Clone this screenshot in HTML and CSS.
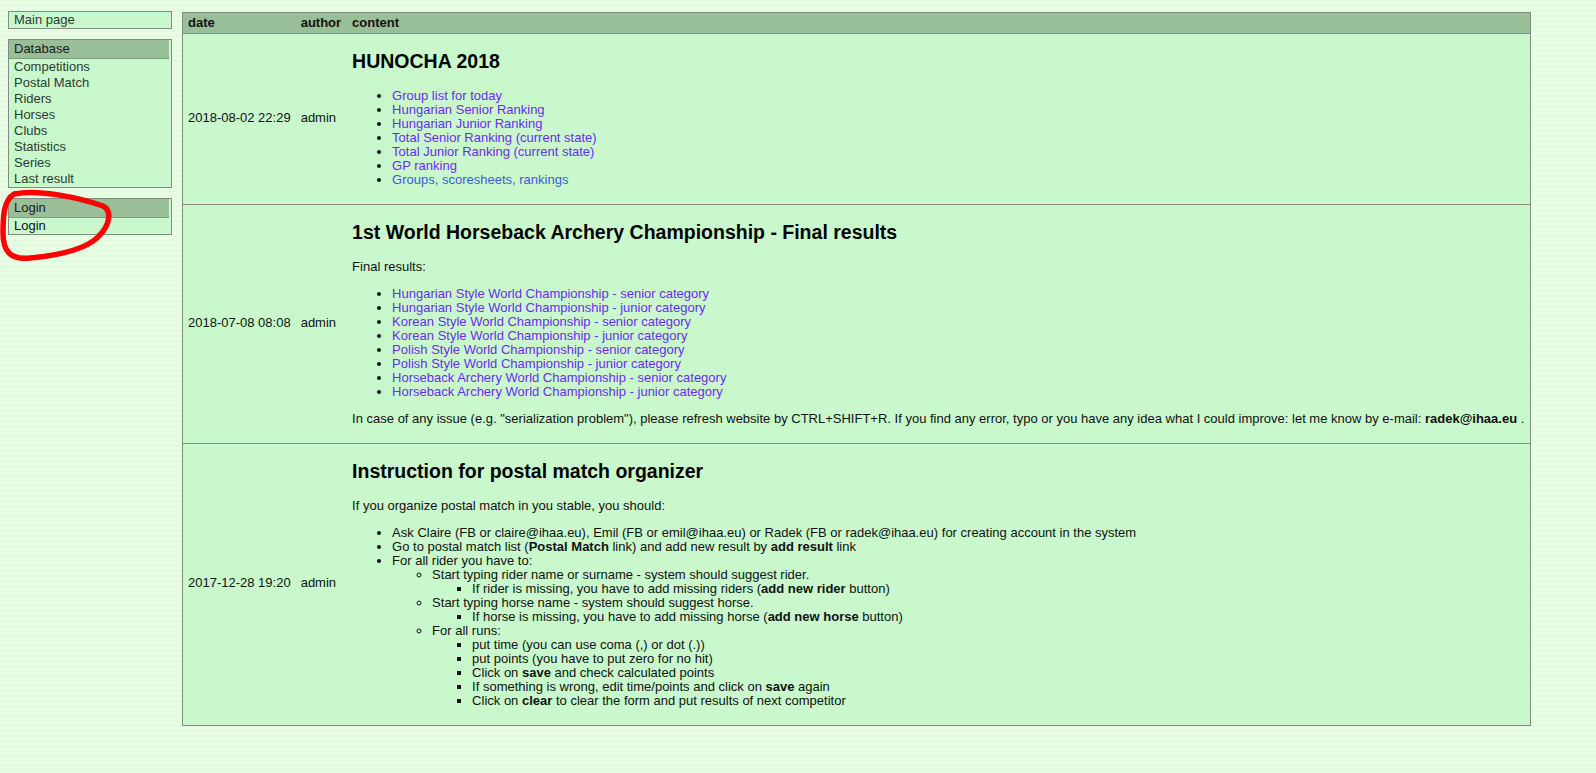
FILE: index.html
```html
<!DOCTYPE html>
<html>
<head>
<meta charset="utf-8">
<title>HA database</title>
<link rel="stylesheet" href="styles.css">
</head>
<body>
<div class="page">
  <div class="sidebar">
    <div class="box">
      <a class="item" href="#">Main page</a>
    </div>
    <div class="box">
      <div class="box-head">Database</div>
      <a class="item" href="#">Competitions</a>
      <a class="item" href="#">Postal Match</a>
      <a class="item" href="#">Riders</a>
      <a class="item" href="#">Horses</a>
      <a class="item" href="#">Clubs</a>
      <a class="item" href="#">Statistics</a>
      <a class="item" href="#">Series</a>
      <a class="item" href="#">Last result</a>
    </div>
    <div class="box">
      <div class="box-head">Login</div>
      <a class="item item-dark" href="#">Login</a>
    </div>
  </div>

  <table class="news">
    <thead>
      <tr><th class="c-date">date</th><th class="c-author">author</th><th class="c-content">content</th></tr>
    </thead>
    <tbody>
      <tr>
        <td class="meta c-date">2018-08-02 22:29</td>
        <td class="meta c-author">admin</td>
        <td class="content c-content">
          <h2>HUNOCHA 2018</h2>
          <ul>
            <li><a href="#">Group list for today</a></li>
            <li><a href="#">Hungarian Senior Ranking</a></li>
            <li><a href="#">Hungarian Junior Ranking</a></li>
            <li><a href="#">Total Senior Ranking (current state)</a></li>
            <li><a href="#">Total Junior Ranking (current state)</a></li>
            <li><a href="#">GP ranking</a></li>
            <li><a class="fresh" href="#">Groups, scoresheets, rankings</a></li>
          </ul>
        </td>
      </tr>
      <tr>
        <td class="meta c-date">2018-07-08 08:08</td>
        <td class="meta c-author">admin</td>
        <td class="content c-content">
          <h2>1st World Horseback Archery Championship - Final results</h2>
          <p>Final results:</p>
          <ul>
            <li><a href="#">Hungarian Style World Championship - senior category</a></li>
            <li><a href="#">Hungarian Style World Championship - junior category</a></li>
            <li><a href="#">Korean Style World Championship - senior category</a></li>
            <li><a href="#">Korean Style World Championship - junior category</a></li>
            <li><a href="#">Polish Style World Championship - senior category</a></li>
            <li><a href="#">Polish Style World Championship - junior category</a></li>
            <li><a href="#">Horseback Archery World Championship - senior category</a></li>
            <li><a href="#">Horseback Archery World Championship - junior category</a></li>
          </ul>
          <p>In case of any issue (e.g. "serialization problem"), please refresh website by CTRL+SHIFT+R. If you find any error, typo or you have any idea what I could improve: let me know by e-mail: <b>radek@ihaa.eu</b> .</p>
        </td>
      </tr>
      <tr>
        <td class="meta c-date">2017-12-28 19:20</td>
        <td class="meta c-author">admin</td>
        <td class="content c-content">
          <h2>Instruction for postal match organizer</h2>
          <p>If you organize postal match in you stable, you should:</p>
          <ul>
            <li>Ask Claire (FB or claire@ihaa.eu), Emil (FB or emil@ihaa.eu) or Radek (FB or radek@ihaa.eu) for creating account in the system</li>
            <li>Go to postal match list (<b>Postal Match</b> link) and add new result by <b>add result</b> link</li>
            <li>For all rider you have to:
              <ul>
                <li>Start typing rider name or surname - system should suggest rider.
                  <ul>
                    <li>If rider is missing, you have to add missing riders (<b>add new rider</b> button)</li>
                  </ul>
                </li>
                <li>Start typing horse name - system should suggest horse.
                  <ul>
                    <li>If horse is missing, you have to add missing horse (<b>add new horse</b> button)</li>
                  </ul>
                </li>
                <li>For all runs:
                  <ul>
                    <li>put time (you can use coma (,) or dot (.))</li>
                    <li>put points (you have to put zero for no hit)</li>
                    <li>Click on <b>save</b> and check calculated points</li>
                    <li>If something is wrong, edit time/points and click on <b>save</b> again</li>
                    <li>Click on <b>clear</b> to clear the form and put results of next competitor</li>
                  </ul>
                </li>
              </ul>
            </li>
          </ul>
        </td>
      </tr>
    </tbody>
  </table>
</div>

<svg class="scribble" width="120" height="270" viewBox="0 0 120 270">
  <path d="M 14 194 C 40 189, 80 198, 103 206 C 113 211, 109 226, 99 236 C 87 249, 62 255, 30 258 C 10 260, 3 251, 3 233 C 3 215, 4 200, 14 194 Z" fill="none" stroke="#ff0000" stroke-width="5.5" stroke-linejoin="round"/>
</svg>
</body>
</html>
```

FILE: styles.css
```css
html, body {
  margin: 0;
  padding: 0;
}

body {
  font-family: "Liberation Sans", Arial, sans-serif;
  font-size: 13px;
  line-height: 14px;
  color: #111;
  background-color: #e6fde1;
  background-image: repeating-linear-gradient(to bottom, #e3fbdd 0px, #e3fbdd 2px, #e9fde4 2px, #e9fde4 5px);
  min-height: 773px;
}

.page {
  display: flex;
  align-items: flex-start;
  gap: 10px;
  padding: 11px 8px 8px 8px;
}

.sidebar {
  display: flex;
  flex-direction: column;
  gap: 10px;
  width: 164px;
  flex: none;
}

.box {
  border: 1px solid #888;
  background: #c8f8cc;
  display: flex;
  flex-direction: column;
}

.box-head {
  background: #99bf99;
  line-height: 16px;
  padding: 1px 5px 1px 5px;
  margin-right: 2px;
  border-bottom: 1px solid #7d9d7f;
  color: #1a1a1a;
}

.item {
  display: block;
  line-height: 16px;
  padding: 0 5px;
  color: #2e3b2e;
  text-decoration: none;
}

.item-dark {
  color: #111;
}

.news {
  border-collapse: collapse;
  border: 1px solid #888;
  background: #c8f8cc;
  flex: none;
  margin-top: 1px;
}

.news th {
  background: #99bf99;
  text-align: left;
  font-weight: bold;
  padding: 3px 5px;
  line-height: 14px;
  border-bottom: 1px solid #888;
  color: #111;
}

.news td {
  padding: 0 5px 4px 5px;
  border-top: 1px solid #888;
  vertical-align: middle;
  white-space: nowrap;
}

.news td.meta {
  padding-bottom: 3px;
}

.news .c-author {
  padding-right: 6px;
}

.news .c-content {
  padding-right: 6px;
}

.content h2 {
  font-size: 19.5px;
  line-height: 23px;
  margin: 16px 0;
  font-weight: bold;
  color: #000;
}

.content p {
  margin: 13px 0;
}

.content ul {
  margin: 13px 0;
  padding-left: 40px;
}

.content ul ul {
  margin: 0;
}

.content a {
  color: #6a2cf2;
  text-decoration: none;
}

.content a.fresh {
  color: #3e5bd8;
}

.scribble {
  position: absolute;
  left: 0;
  top: 0;
  pointer-events: none;
}
```
